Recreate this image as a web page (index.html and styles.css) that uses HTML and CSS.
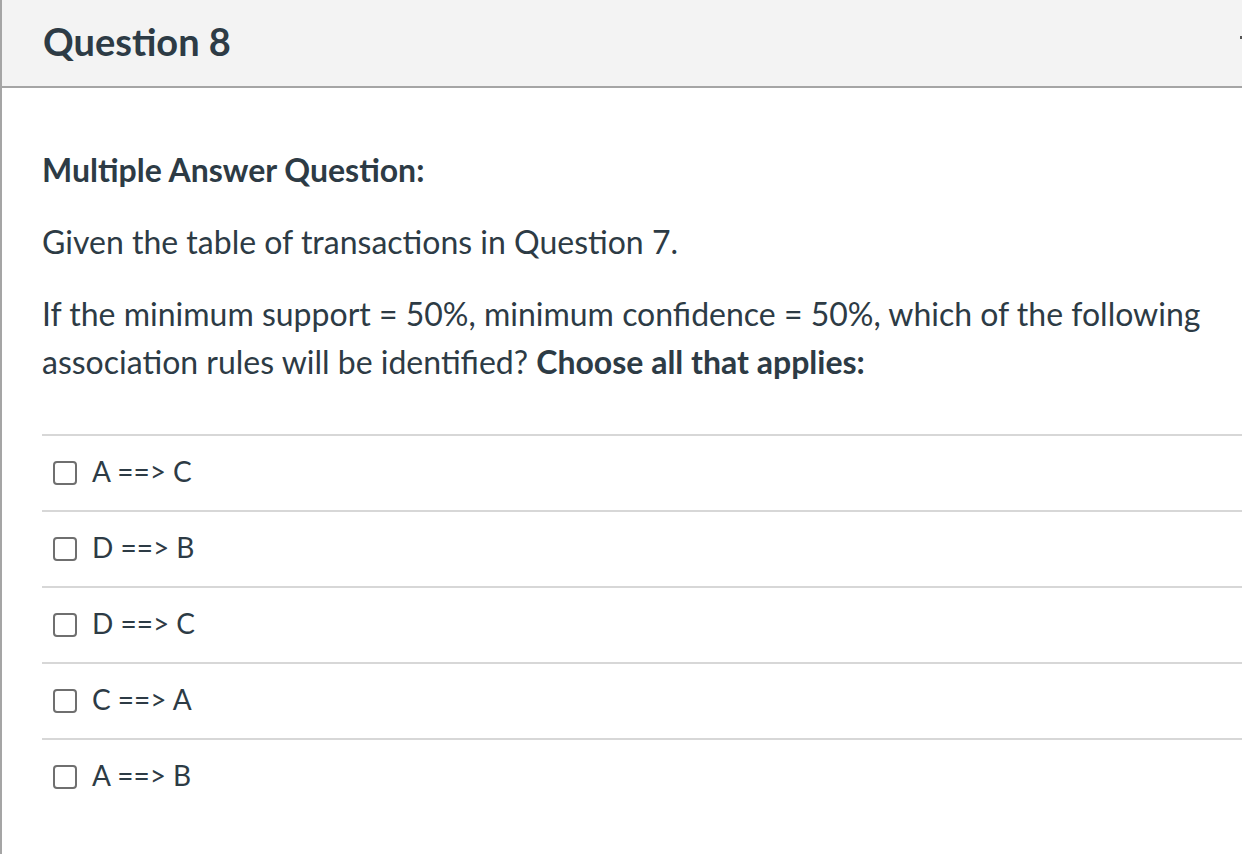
FILE: index.html
```html
<!DOCTYPE html>
<html lang="en">
<head>
<meta charset="utf-8">
<title>Question 8</title>
<link rel="stylesheet" href="styles.css">
</head>
<body>
<div class="question">
  <div class="header">
    <h2 class="title">Question 8</h2>
    <span class="marker"></span>
  </div>
  <div class="content">
    <p class="strong">Multiple Answer Question:</p>
    <p>Given the table of transactions in Question 7.</p>
    <p>If the minimum support = 50%, minimum confidence = 50%, which of the following association rules will be identified? <strong>Choose all that applies:</strong></p>
    <div class="answers">
      <label class="answer"><span class="box"></span><span class="atext">A ==&gt; C</span></label>
      <label class="answer"><span class="box"></span><span class="atext">D ==&gt; B</span></label>
      <label class="answer"><span class="box"></span><span class="atext">D ==&gt; C</span></label>
      <label class="answer"><span class="box"></span><span class="atext">C ==&gt; A</span></label>
      <label class="answer"><span class="box"></span><span class="atext">A ==&gt; B</span></label>
    </div>
  </div>
</div>
</body>
</html>
```
FILE: styles.css
```css
html, body {
  margin: 0;
  padding: 0;
  background: #ffffff;
}
body {
  font-family: Lato, "Noto Sans", sans-serif;
  color: #2d3b45;
  width: 1242px;
  height: 854px;
  overflow: hidden;
}
.question {
  border-left: 2px solid #a5a5a5;
  height: 854px;
  box-sizing: border-box;
}
.header {
  background: #f3f3f3;
  height: 86px;
  border-bottom: 2px solid #a5a5a5;
  display: flex;
  align-items: center;
  justify-content: space-between;
  padding-left: 41px;
}
.title {
  margin: 0 0 5px 0;
  font-size: 38px;
  font-weight: 700;
  line-height: 44px;
}
.marker {
  width: 2px;
  height: 3px;
  background: #555;
  margin-bottom: 12px;
}
.content {
  padding-left: 40px;
  padding-top: 58px;
}
.content p {
  margin: 0 0 24px 0;
  font-size: 32px;
  line-height: 48px;
  padding-right: 30px;
}
.content p.strong {
  font-weight: 700;
}
.content strong {
  font-weight: 700;
}
.answers {
  margin-top: 48px;
}
.answer {
  display: flex;
  align-items: center;
  height: 74px;
  border-top: 2px solid #d7d7d7;
  padding-left: 11px;
}
.box {
  width: 20px;
  height: 20px;
  border: 2px solid #6f6f6f;
  border-radius: 4px;
  margin-right: 15px;
  flex: none;
}
.atext {
  font-size: 28px;
  line-height: 32px;
  padding-bottom: 4px;
}
```
